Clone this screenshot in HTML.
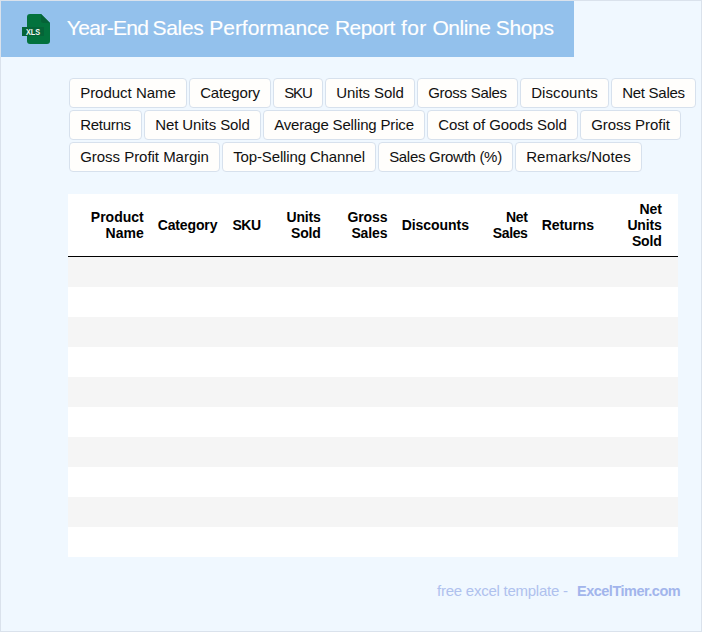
<!DOCTYPE html>
<html><head><meta charset="utf-8"><title>Year-End Sales Performance Report for Online Shops</title>
<style>
html,body{margin:0;padding:0;}
body{width:702px;height:632px;overflow:hidden;background:#f0f8ff;font-family:"Liberation Sans",sans-serif;position:relative;}
#frame{position:absolute;left:0;top:0;width:700px;height:630px;border:1px solid #dae2ec;background:#f0f8ff;}
#hdr{position:absolute;left:1px;top:1px;width:573px;height:56px;background:#93c1ec;}
.tw{position:absolute;top:14px;font-size:21px;line-height:26px;color:#fff;white-space:nowrap;-webkit-text-stroke:0.15px #fff;}
.tag{position:absolute;box-sizing:border-box;height:30px;border:1px solid #d7e1ed;border-radius:4px;background:#fffefc;color:#111;font-size:15px;line-height:28px;text-align:center;white-space:nowrap;}
#tbl{position:absolute;left:68px;top:194px;width:610px;height:363px;background:#fff;overflow:hidden;}
#thead{position:absolute;left:0;top:0;width:610px;height:62px;border-bottom:1px solid #000;}
.th{position:absolute;top:0;height:62px;box-sizing:border-box;display:flex;align-items:center;justify-content:flex-end;text-align:right;font-weight:bold;font-size:14px;line-height:16px;color:#000;}
.tr{position:absolute;left:0;width:610px;height:30px;}
#foot{position:absolute;top:582px;left:0;height:18px;font-size:15px;line-height:18px;white-space:nowrap;}
#f1{position:absolute;left:437px;color:#afc1ee;letter-spacing:-0.245px;}
#f2{position:absolute;left:577px;color:#a2b5ec;font-weight:bold;font-size:14.5px;letter-spacing:-0.5px;}
</style></head>
<body>
<div id="frame"></div>
<div id="hdr">
<svg style="position:absolute;left:20px;top:12px" width="32" height="34" viewBox="0 0 32 34">
<path d="M9 1 H20 L29 10 V28 a3 3 0 0 1 -3 3 H9 a3 3 0 0 1 -3 -3 V4 a3 3 0 0 1 3 -3 z" fill="#03723d"/>
<path d="M20 1 L29 10 H22.5 a2.5 2.5 0 0 1 -2.5 -2.5 z" fill="#056237"/>
<rect x="1" y="14" width="22" height="9" fill="#056438"/>
<text x="5" y="21.6" font-family="Liberation Sans, sans-serif" font-weight="bold" font-size="8.2" fill="#f6faf7" textLength="14.2" lengthAdjust="spacingAndGlyphs">XLS</text>
</svg>
<span class="tw" style="left:65.85px;letter-spacing:-0.657px">Year-End</span><span class="tw" style="left:151.55px;letter-spacing:-0.325px">Sales</span><span class="tw" style="left:208.30px;letter-spacing:-0.035px">Performance</span><span class="tw" style="left:334.00px;letter-spacing:-0.560px">Report</span><span class="tw" style="left:400.10px;letter-spacing:0.300px">for</span><span class="tw" style="left:431.40px;letter-spacing:-0.440px">Online</span><span class="tw" style="left:494.85px;letter-spacing:-0.375px">Shops</span>
</div>
<div class="tag" style="left:69px;top:78px;width:118px;letter-spacing:-0.017px">Product Name</div>
<div class="tag" style="left:189px;top:78px;width:82px;letter-spacing:-0.150px">Category</div>
<div class="tag" style="left:273px;top:78px;width:50px;letter-spacing:-1.033px">SKU</div>
<div class="tag" style="left:325px;top:78px;width:90px;letter-spacing:-0.070px">Units Sold</div>
<div class="tag" style="left:417px;top:78px;width:101px;letter-spacing:-0.273px">Gross Sales</div>
<div class="tag" style="left:520px;top:78px;width:89px;letter-spacing:0.089px">Discounts</div>
<div class="tag" style="left:611px;top:78px;width:85px;letter-spacing:-0.256px">Net Sales</div>
<div class="tag" style="left:69px;top:110px;width:73px;letter-spacing:-0.257px">Returns</div>
<div class="tag" style="left:144px;top:110px;width:117px;letter-spacing:-0.086px">Net Units Sold</div>
<div class="tag" style="left:263px;top:110px;width:162px;letter-spacing:-0.162px">Average Selling Price</div>
<div class="tag" style="left:427px;top:110px;width:151px;letter-spacing:-0.078px">Cost of Goods Sold</div>
<div class="tag" style="left:580px;top:110px;width:101px;letter-spacing:-0.042px">Gross Profit</div>
<div class="tag" style="left:69px;top:142px;width:151px;letter-spacing:-0.026px">Gross Profit Margin</div>
<div class="tag" style="left:222px;top:142px;width:154px;letter-spacing:-0.137px">Top-Selling Channel</div>
<div class="tag" style="left:378px;top:142px;width:135px;letter-spacing:-0.300px">Sales Growth (%)</div>
<div class="tag" style="left:515px;top:142px;width:127px;letter-spacing:0.100px">Remarks/Notes</div>

<div id="tbl">
<div id="thead">
<div class="th" style="left:0px;width:82.69999999999999px;padding-right:7px;letter-spacing:0px"><span>Product<br>Name</span></div>
<div class="th" style="left:82.69999999999999px;width:73.80000000000001px;padding-right:7.12px;letter-spacing:-0.12px"><span>Category</span></div>
<div class="th" style="left:156.5px;width:43.60000000000002px;padding-right:7.5px;letter-spacing:-0.5px"><span>SKU</span></div>
<div class="th" style="left:200.10000000000002px;width:59.799999999999955px;padding-right:7.15px;letter-spacing:-0.15px"><span>Units<br>Sold</span></div>
<div class="th" style="left:259.9px;width:66.60000000000002px;padding-right:7.12px;letter-spacing:-0.12px"><span>Gross<br>Sales</span></div>
<div class="th" style="left:326.5px;width:81.5px;padding-right:7.05px;letter-spacing:-0.05px"><span>Discounts</span></div>
<div class="th" style="left:408px;width:58.89999999999998px;padding-right:7.35px;letter-spacing:-0.35px"><span>Net<br>Sales</span></div>
<div class="th" style="left:466.9px;width:66.10000000000002px;padding-right:7.1px;letter-spacing:-0.1px"><span>Returns</span></div>
<div class="th" style="left:533px;width:77px;padding-right:16.349999999999998px;letter-spacing:-0.15px"><span>Net<br>Units<br>Sold</span></div>
</div>
<div class="tr" style="top:63px;background:#f5f5f5"></div>
<div class="tr" style="top:93px;background:#ffffff"></div>
<div class="tr" style="top:123px;background:#f5f5f5"></div>
<div class="tr" style="top:153px;background:#ffffff"></div>
<div class="tr" style="top:183px;background:#f5f5f5"></div>
<div class="tr" style="top:213px;background:#ffffff"></div>
<div class="tr" style="top:243px;background:#f5f5f5"></div>
<div class="tr" style="top:273px;background:#ffffff"></div>
<div class="tr" style="top:303px;background:#f5f5f5"></div>
<div class="tr" style="top:333px;background:#ffffff"></div>
</div>
<div id="foot"><span id="f1">free excel template -</span><span id="f2">ExcelTimer.com</span></div>
</body></html>
